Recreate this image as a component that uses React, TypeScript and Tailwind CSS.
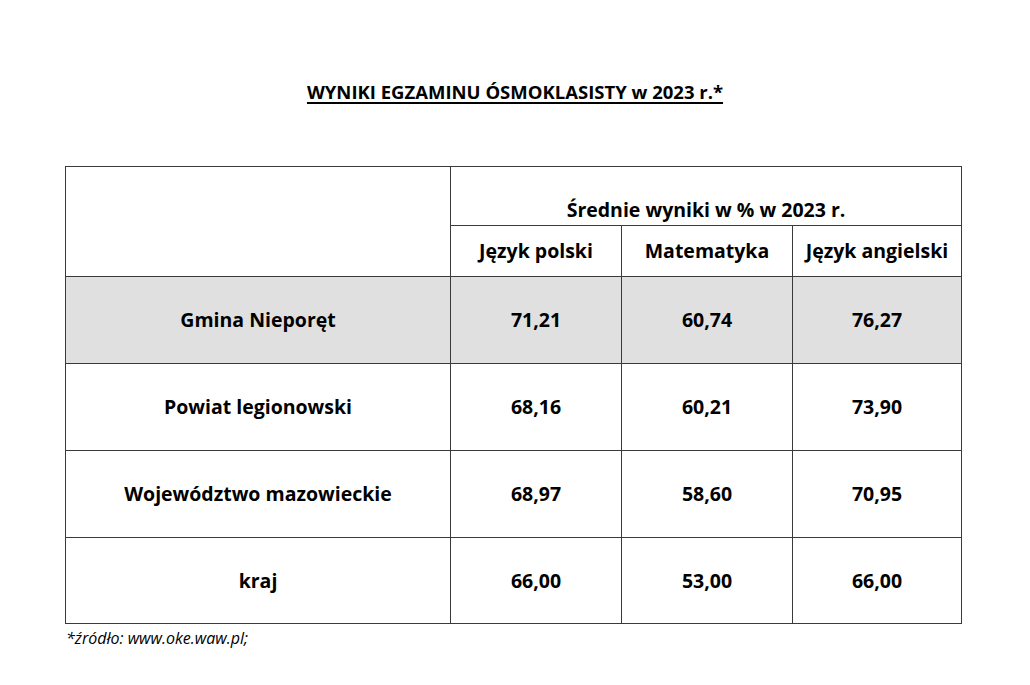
import React from 'react';

const rows = [
    { name: 'Gmina Nieporęt', values: ['71,21', '60,74', '76,27'], shaded: true },
    { name: 'Powiat legionowski', values: ['68,16', '60,21', '73,90'] },
    { name: 'Województwo mazowieckie', values: ['68,97', '58,60', '70,95'] },
    { name: 'kraj', values: ['66,00', '53,00', '66,00'] },
];

const cell = 'border border-[#3a3a3a] text-center align-middle';

export default function App() {
    return (
        <div className="w-[1030px] h-[685px] bg-white text-black font-['Open_Sans',sans-serif] font-bold">
            <div className="pt-[79px] text-center leading-[26px]">
                <span className="text-[18.5px] underline underline-offset-[3px] decoration-[1.5px]">
                    WYNIKI EGZAMINU ÓSMOKLASISTY w 2023 r.*
                </span>
            </div>
            <div className="ml-[65px] mt-[60px] w-[897px]">
                <table className="w-full border-collapse table-fixed text-[19.5px] leading-[26px]">
                    <colgroup>
                        <col className="w-[385px]" />
                        <col className="w-[171px]" />
                        <col className="w-[171px]" />
                        <col />
                    </colgroup>
                    <tbody>
                        <tr className="h-[59px]">
                            <td rowSpan={2} className={cell}></td>
                            <td colSpan={3} className={`${cell} pt-[28px]`}>Średnie wyniki w % w 2023 r.</td>
                        </tr>
                        <tr className="h-[51px]">
                            <td className={cell}>Język polski</td>
                            <td className={cell}>Matematyka</td>
                            <td className={cell}>Język angielski</td>
                        </tr>
                        {rows.map((r, idx) => (
                            <tr
                                key={r.name}
                                className={`${idx === rows.length - 1 ? 'h-[86px]' : 'h-[87px]'} ${r.shaded ? 'bg-[#e0e0e0]' : ''}`}
                            >
                                <td className={cell}>{r.name}</td>
                                {r.values.map((v, i) => (
                                    <td key={i} className={cell}>{v}</td>
                                ))}
                            </tr>
                        ))}
                    </tbody>
                </table>
                <p className="mt-[2px] ml-[1px] text-[16px] font-normal italic">*źródło: www.oke.waw.pl;</p>
            </div>
        </div>
    );
}
